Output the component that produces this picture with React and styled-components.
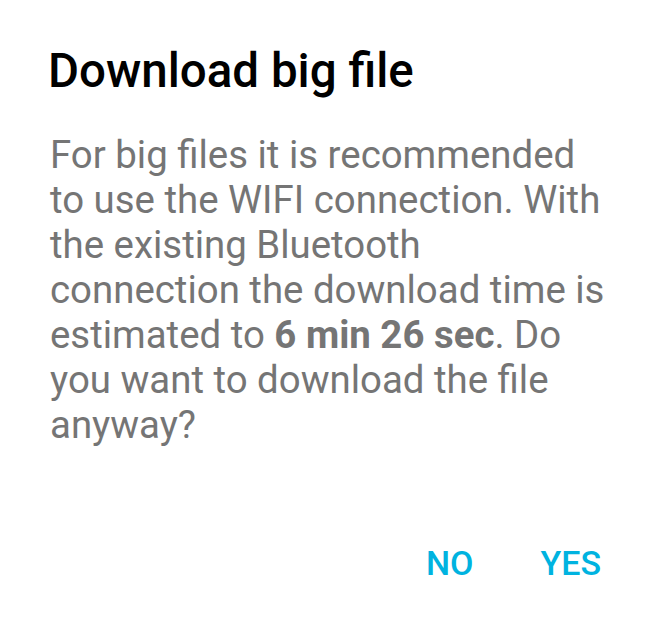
import React from "react";
import styled, { createGlobalStyle } from "styled-components";

const Global = createGlobalStyle`
  html, body { margin: 0; padding: 0; background: #fff; }
  body { font-family: Roboto, "Noto Sans", sans-serif; }
`;

const Dialog = styled.div`
  width: 646px;
  height: 617px;
  box-sizing: border-box;
  padding: 43px 38px 0 48px;
  display: flex;
  flex-direction: column;
  background: #fff;
`;

const Title = styled.h1`
  margin: 0;
  font-family: Roboto, sans-serif;
  font-weight: 500;
  font-size: 47.5px;
  line-height: 56px;
  color: #000;
`;

const Body = styled.p`
  margin: 33px 0 0 2px;
  font-family: Roboto, sans-serif;
  font-size: 38.4px;
  line-height: 45px;
  color: #757575;
  b { font-weight: 700; }
`;

const Actions = styled.div`
  display: flex;
  justify-content: flex-end;
  gap: 67px;
  margin: 96px 7px 0 0;
`;

const ActionButton = styled.button`
  border: none;
  background: none;
  padding: 0;
  font-family: Roboto, sans-serif;
  font-weight: 500;
  font-size: 34px;
  line-height: 40px;
  color: #00b3e0;
  cursor: pointer;
`;

export default function App() {
  return (
    <>
      <Global />
      <Dialog>
        <Title>Download big file</Title>
        <Body>
          For big files it is recommended to use the WIFI connection. With the
          existing Bluetooth connection the download time is estimated to{" "}
          <b>6 min 26 sec</b>. Do you want to download the file anyway?
        </Body>
        <Actions>
          <ActionButton>NO</ActionButton>
          <ActionButton>YES</ActionButton>
        </Actions>
      </Dialog>
    </>
  );
}
